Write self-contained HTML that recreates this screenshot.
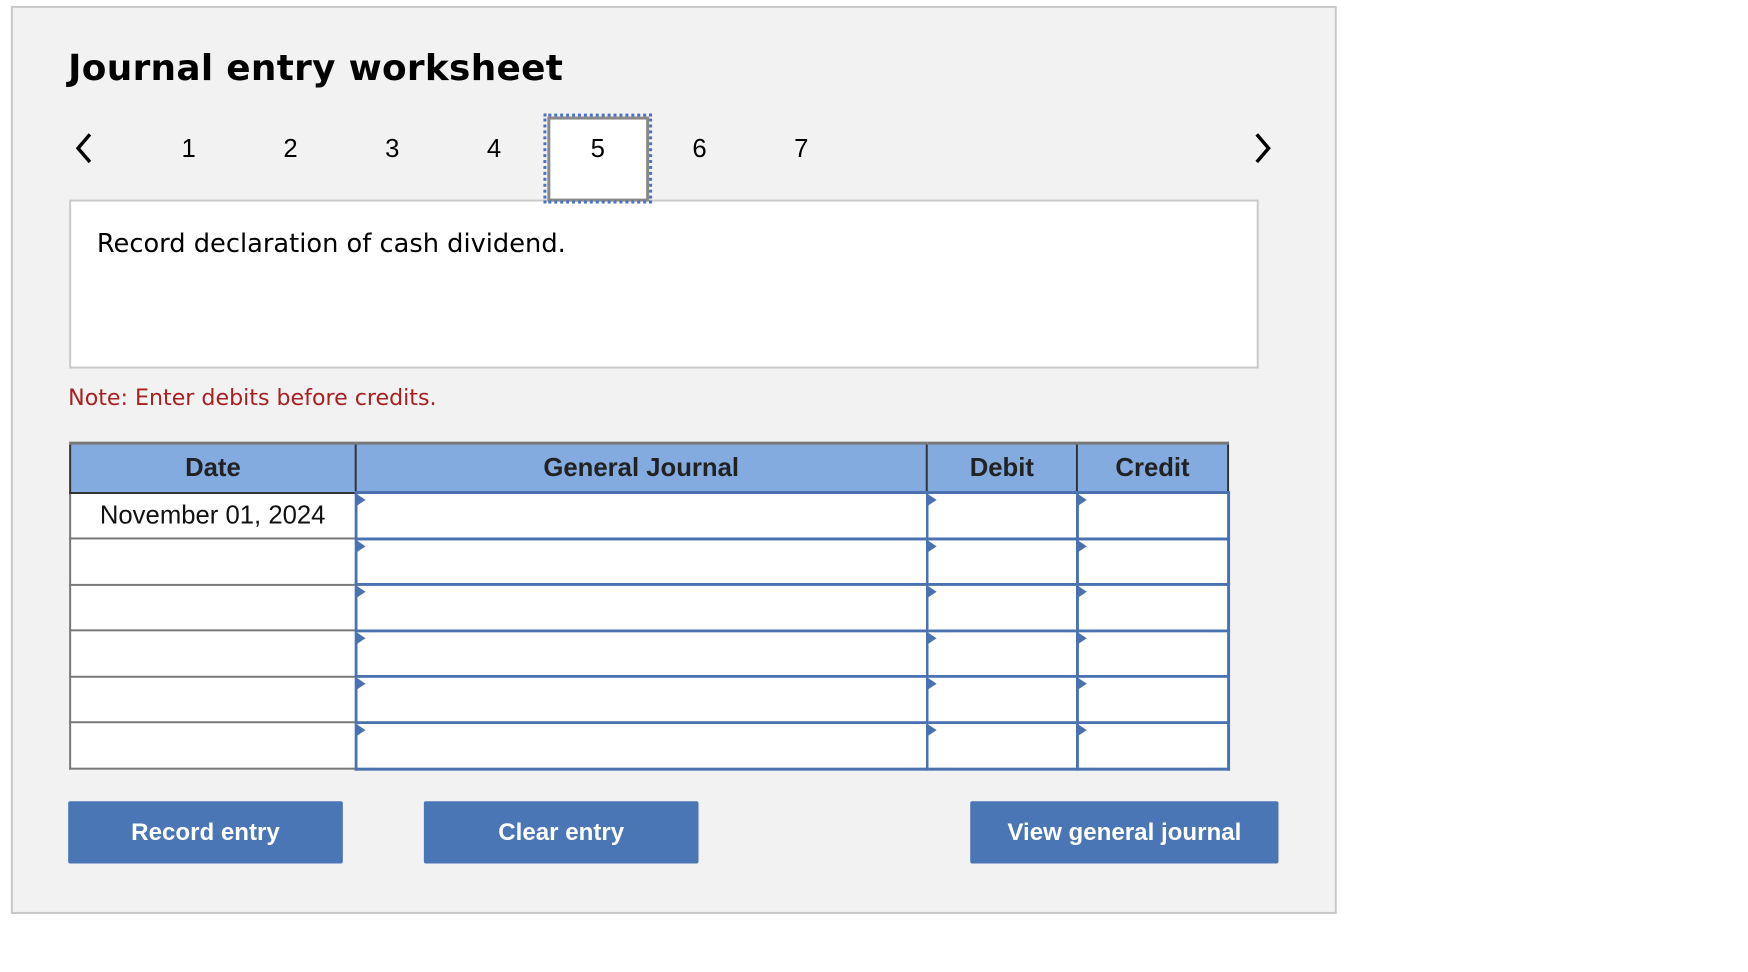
<!DOCTYPE html>
<html><head><meta charset="utf-8"><style>
*{box-sizing:border-box;margin:0;padding:0}
body{width:1748px;height:972px;background:#fff;position:relative;overflow:hidden;font-family:"Liberation Sans",Arial,sans-serif}
#w{position:absolute;left:0;top:0;width:1748px;height:972px;transform:scale(0.988);transform-origin:0 0}
.panel{position:absolute;left:11px;top:6px;width:1342px;height:919px;background:#f2f2f2;border:2px solid #c8c8c8}
.abs{position:absolute}
h1{position:absolute;left:69px;top:47px;font:bold 36.3px "DejaVu Sans",Verdana,sans-serif;color:#000;letter-spacing:0.3px}
.num{position:absolute;top:135px;font-size:26px;color:#000;width:40px;text-align:center}
.desc{position:absolute;left:70px;top:202px;width:1204px;height:171px;background:#fff;border:2px solid #c8c8c8}
.desc span{position:absolute;left:26px;top:28px;font:26px "DejaVu Sans",Verdana,sans-serif;color:#000}
.note{position:absolute;left:69px;top:390px;font:22.4px "DejaVu Sans",Verdana,sans-serif;color:#a82020}
table{position:absolute;left:70px;top:447px;border-collapse:collapse}
th{background:#83abdf;height:50px;font-size:26px;font-weight:bold;color:#222;border:2px solid #333;border-top:3px solid #777}
td{height:46.6px;background:#fff;padding:0}
td.d{border:2px solid #777;font-size:26px;text-align:center;color:#111}
td.i{border:3px solid #4a72b0;position:relative}
td.i:before{content:"";position:absolute;left:-1px;top:0;border-left:9px solid #4a72b0;border-top:6px solid transparent;border-bottom:6px solid transparent}
.btn{position:absolute;top:811px;height:63px;background:#4a76b5;color:#fff;font-size:24.4px;font-weight:bold;display:flex;align-items:center;justify-content:center;border-radius:2px}
</style></head><body><div id="w">
<div class="panel"></div>
<h1>Journal entry worksheet</h1>
<svg class="abs" style="left:74px;top:134px" width="22" height="32"><path d="M17 2 L5 16 L17 30" stroke="#000" stroke-width="3.5" fill="none"/></svg>
<svg class="abs" style="left:1267px;top:134px" width="22" height="32"><path d="M5 2 L17 16 L5 30" stroke="#000" stroke-width="3.5" fill="none"/></svg>
<div class="num" style="left:171px">1</div>
<div class="num" style="left:274px">2</div>
<div class="num" style="left:377px">3</div>
<div class="num" style="left:480px">4</div>
<div class="desc"><span>Record declaration of cash dividend.</span></div>
<div class="abs" style="left:554px;top:118px;width:103px;height:86px;border:3px solid #888;background:#fff"></div>
<div class="abs" style="left:550px;top:115px;width:110px;height:91px;border:3px dotted #4a72c0"></div>
<div class="num" style="left:585px">5</div>
<div class="num" style="left:688px">6</div>
<div class="num" style="left:791px">7</div>
<div class="note">Note: Enter debits before credits.</div>
<table>
<tr><th style="width:289px">Date</th><th style="width:578px">General Journal</th><th style="width:152px">Debit</th><th style="width:153px">Credit</th></tr>
<tr><td class="d">November 01, 2024</td><td class="i"></td><td class="i"></td><td class="i"></td></tr>
<tr><td class="d"></td><td class="i"></td><td class="i"></td><td class="i"></td></tr>
<tr><td class="d"></td><td class="i"></td><td class="i"></td><td class="i"></td></tr>
<tr><td class="d"></td><td class="i"></td><td class="i"></td><td class="i"></td></tr>
<tr><td class="d"></td><td class="i"></td><td class="i"></td><td class="i"></td></tr>
<tr><td class="d"></td><td class="i"></td><td class="i"></td><td class="i"></td></tr>
</table>
<div class="btn" style="left:69px;width:278px">Record entry</div>
<div class="btn" style="left:429px;width:278px">Clear entry</div>
<div class="btn" style="left:982px;width:312px">View general journal</div>
</div></body></html>
